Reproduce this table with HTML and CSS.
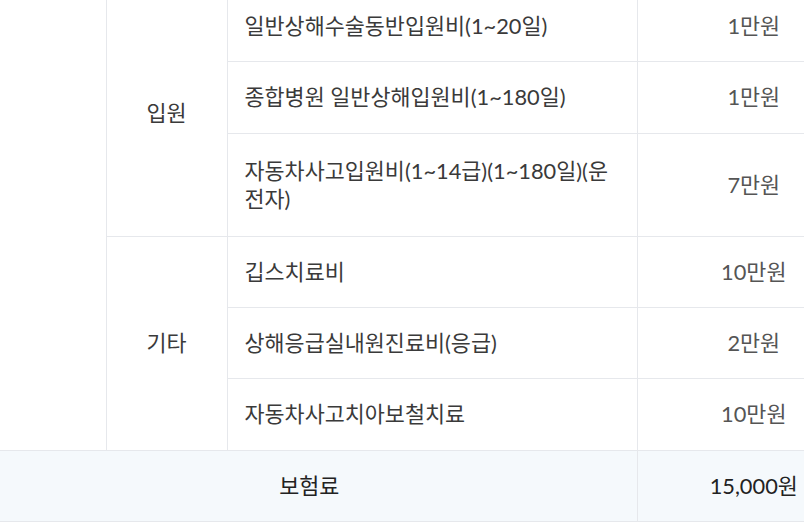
FILE: index.html
```html
<!DOCTYPE html>
<html lang="ko">
<head>
<meta charset="utf-8">
<link rel="stylesheet" href="styles.css">
</head>
<body>
<div class="viewport">
  <table class="coverage">
    <colgroup>
      <col class="c-group">
      <col class="c-cat">
      <col class="c-item">
      <col class="c-amt">
    </colgroup>
    <tbody>
      <tr>
        <td class="group" rowspan="6"></td>
        <td class="cat" rowspan="3">입원</td>
        <td class="item">일반상해수술동반입원비(1~20일)</td>
        <td class="amt">1만원</td>
      </tr>
      <tr>
        <td class="item">종합병원 일반상해입원비(1~180일)</td>
        <td class="amt">1만원</td>
      </tr>
      <tr class="tall">
        <td class="item">자동차사고입원비(1~14급)(1~180일)(운전자)</td>
        <td class="amt">7만원</td>
      </tr>
      <tr>
        <td class="cat" rowspan="3">기타</td>
        <td class="item">깁스치료비</td>
        <td class="amt">10만원</td>
      </tr>
      <tr>
        <td class="item">상해응급실내원진료비(응급)</td>
        <td class="amt">2만원</td>
      </tr>
      <tr>
        <td class="item">자동차사고치아보철치료</td>
        <td class="amt">10만원</td>
      </tr>
      <tr class="total">
        <td class="total-label" colspan="3">보험료</td>
        <td class="amt total-amt">15,000원</td>
      </tr>
    </tbody>
  </table>
</div>
</body>
</html>
```

FILE: styles.css
```css
html, body {
  margin: 0;
  padding: 0;
  background: #ffffff;
}

.viewport {
  width: 804px;
  height: 524px;
  overflow: hidden;
}

.coverage {
  margin: -9px 0 0 -18px;
  width: 888px;
  border-collapse: collapse;
  table-layout: fixed;
  font-family: Lato, "Noto Sans CJK KR", sans-serif;
  font-size: 21.8px;
  line-height: 27.5px;
  color: #3a3a3a;
}

.c-group { width: 124px; }
.c-cat { width: 121px; }
.c-item { width: 410px; }
.c-amt { width: 233px; }

.coverage td {
  padding: 21px 18px 21.85px;
  border-bottom: 1px solid #e6e8ec;
  border-left: 1px solid #e6e8ec;
  vertical-align: middle;
}

.coverage td.group {
  border-left: none;
}

.coverage tr.tall td {
  padding-top: 23.5px;
  padding-bottom: 23.5px;
}

.cat {
  text-align: center;
  padding: 0;
}

.coverage td.item {
  text-align: left;
  padding-left: 17px;
  padding-right: 14px;
}

.amt {
  text-align: center;
  color: #555555;
}

.total td {
  background: #f5f9fc;
}

.coverage td.total-label {
  border-left: none;
  text-align: center;
  color: #222222;
}

.total-amt {
  color: #222222;
}
```
